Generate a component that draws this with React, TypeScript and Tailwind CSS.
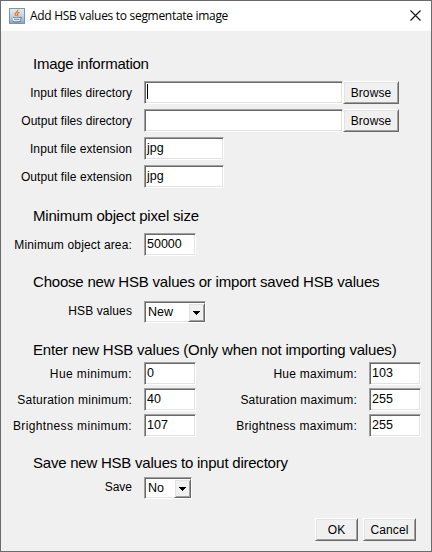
import React from "react";

const sunken =
  "border border-t-[#a0a0a0] border-l-[#a0a0a0] border-r-white border-b-white shadow-[inset_1px_1px_0_#696969,inset_-1px_-1px_0_#e3e3e3] bg-white";
const raised =
  "border border-t-white border-l-white border-r-[#696969] border-b-[#696969] shadow-[inset_1px_1px_0_#e3e3e3,inset_-1px_-1px_0_#a0a0a0] bg-[#f0f0f0]";

function Heading({ children, className }: { children: string; className: string }) {
  return (
    <h2 className={`ml-8 h-5 leading-5 text-[15px] whitespace-nowrap ${className}`}>
      <span>{children}</span>
    </h2>
  );
}

function Label({
  children,
  width = "w-[131px]",
  leading = "leading-[24px]",
  tracking = "",
}: {
  children: string;
  width?: string;
  leading?: string;
  tracking?: string;
}) {
  return (
    <label className={`shrink-0 text-right whitespace-nowrap h-[23px] ${leading} ${width}`}>
      <span className={tracking}>{children}</span>
    </label>
  );
}

function Field({ value, width, caret = false }: { value: string; width: string; caret?: boolean }) {
  return (
    <div className={`flex h-[23px] shrink-0 items-start pl-[2px] ${sunken} ${width}`}>
      {caret && <span className="mt-[2px] h-[15px] w-px bg-black" />}
      <span className="leading-5 text-[12.5px]">{value}</span>
    </div>
  );
}

function Select({ value, width }: { value: string; width: string }) {
  return (
    <div className={`flex h-[22px] justify-between pt-px pl-px ${sunken} ${width}`}>
      <span className="pl-[2px] leading-[18px] text-[12.5px]">{value}</span>
      <span className={`flex h-[19px] w-[17px] items-center justify-center ${raised}`}>
        <svg width="7" height="4" viewBox="0 0 7 4" shapeRendering="crispEdges">
          <path d="M0 0h7v1H6v1H5v1H4v1H3V3H2V2H1V1H0z" fill="#000" />
        </svg>
      </span>
    </div>
  );
}

function Button({ children, className }: { children: string; className: string }) {
  return (
    <button className={`flex h-[23px] shrink-0 items-center justify-center tracking-[0.12px] ${raised} ${className}`}>
      <span>{children}</span>
    </button>
  );
}

function JavaIcon() {
  return (
    <svg width="16" height="16" viewBox="0 0 16 16">
      <defs>
        <linearGradient id="tile" x1="0" y1="0" x2="0" y2="1">
          <stop offset="0" stopColor="#e4ebf1" />
          <stop offset="0.5" stopColor="#c6d3df" />
          <stop offset="1" stopColor="#8aa5bf" />
        </linearGradient>
      </defs>
      <rect x="0.5" y="0.5" width="15" height="15" fill="url(#tile)" stroke="#7896b2" />
      <path d="M4 9.500h7v2.200c0 1-1 1.600-3.500 1.600S4 12.700 4 11.700z" fill="#f3f6f9" />
      <path d="M8.700 1.800c.8 2-3 2.600-2.500 4.500.2.700.8 1.100 1.200 1.700M10.500 4.200C8.500 5 8 5.900 8.600 6.600c.5.600.1 1.200-.4 1.500" fill="none" stroke="#e5762b" strokeWidth="1.300" />
      <path d="M4 9.300c1.500.6 5.500.6 7 0M11 9.300c2.200-.5 2.200 1.700-.4 2M4.900 11.300c1.500.5 4 .5 5.200 0M3.500 13.300c2 .9 6.500.9 8.500-.2" fill="none" stroke="#547b9d" strokeWidth="0.900" />
    </svg>
  );
}

const ranges = [
  { name: "Hue", min: "0", max: "103", minTracking: "tracking-[0.4px]", maxTracking: "tracking-[0.24px]" },
  { name: "Saturation", min: "40", max: "255", minTracking: "tracking-[0.25px]", maxTracking: "tracking-[0.17px]" },
  { name: "Brightness", min: "107", max: "255", minTracking: "tracking-[0.37px]", maxTracking: "tracking-[0.28px]" },
];

export default function App() {
  return (
    <div className="flex h-[552px] w-[432px] flex-col border border-[#6b6b6b] bg-[#f0f0f0] font-['Liberation_Sans',Arial,sans-serif] text-[12px] text-black">
      <header className="flex h-[30px] shrink-0 items-center bg-white pl-2 pr-[10px]">
        <JavaIcon />
        <span className="ml-[5px] font-['Open_Sans','Noto_Sans',sans-serif] text-[12px] leading-4 tracking-[-0.3px]">
          Add HSB values to segmentate image
        </span>
        <svg className="ml-auto -mt-px" width="11" height="11" viewBox="0 0 11 11">
          <path d="M.5.5l10 10M10.500.5l-10 10" stroke="#111" strokeWidth="1.100" />
        </svg>
      </header>

      <Heading className="mt-[23px] tracking-[-0.26px]">Image information</Heading>
      <div className="mt-[7px] flex flex-col gap-[5px]">
        <div className="flex">
          <Label tracking="tracking-[0.05px]">Input files directory</Label>
          <div className="ml-3 flex">
            <Field value="" width="w-[199px]" caret />
            <Button className="w-[56px]">Browse</Button>
          </div>
        </div>
        <div className="flex">
          <Label tracking="tracking-[0.03px]">Output files directory</Label>
          <div className="ml-3 flex">
            <Field value="" width="w-[199px]" />
            <Button className="w-[56px]">Browse</Button>
          </div>
        </div>
        <div className="flex gap-3">
          <Label tracking="tracking-[0.1px]">Input file extension</Label>
          <Field value="jpg" width="w-[80px]" />
        </div>
        <div className="flex gap-3">
          <Label tracking="tracking-[0.08px]">Output file extension</Label>
          <Field value="jpg" width="w-[80px]" />
        </div>
      </div>

      <Heading className="mt-[18px] tracking-[-0.2px]">Minimum object pixel size</Heading>
      <div className="mt-[7px] flex gap-3">
        <Label tracking="tracking-[0.15px]">Minimum object area:</Label>
        <Field value="50000" width="w-[52px]" />
      </div>

      <Heading className="mt-4 tracking-[-0.2px]">Choose new HSB values or import saved HSB values</Heading>
      <div className="mt-[9px] flex h-[22px] gap-3">
        <Label leading="leading-5" tracking="tracking-[0.1px]">HSB values</Label>
        <Select value="New" width="w-[62px]" />
      </div>

      <Heading className="mt-[17px] tracking-[-0.19px]">
        Enter new HSB values (Only when not importing values)
      </Heading>
      <div className="mt-[2px] flex flex-col gap-[3px]">
        {ranges.map((r) => (
          <div key={r.name} className="flex gap-3">
            <Label tracking={r.minTracking}>{`${r.name} minimum:`}</Label>
            <Field value={r.min} width="w-[52px]" />
            <Label width="w-[149px]" tracking={r.maxTracking}>{`${r.name} maximum:`}</Label>
            <Field value={r.max} width="w-[52px]" />
          </div>
        ))}
      </div>

      <Heading className="mt-4 tracking-[-0.23px]">Save new HSB values to input directory</Heading>
      <div className="mt-1 flex h-[22px] gap-3">
        <Label leading="leading-5">Save</Label>
        <Select value="No" width="w-[48px]" />
      </div>

      <footer className="mt-[19px] flex justify-end gap-[5px] pr-[15px]">
        <Button className="w-[43px]">OK</Button>
        <Button className="w-[53px]">Cancel</Button>
      </footer>
    </div>
  );
}
